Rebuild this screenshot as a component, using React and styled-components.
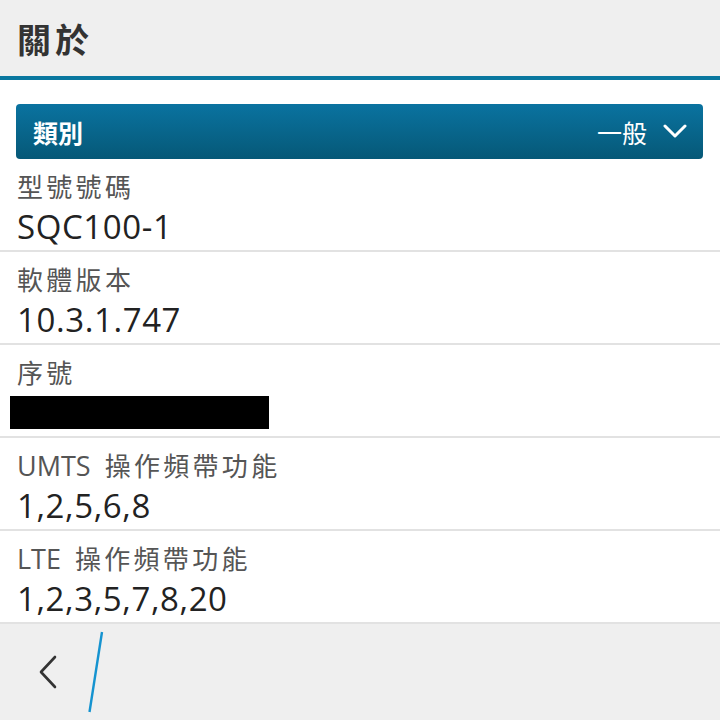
import React from 'react';
import styled, { createGlobalStyle } from 'styled-components';

const GlobalStyle = createGlobalStyle`
  html, body {
    margin: 0;
    padding: 0;
    background: #ffffff;
  }
  body {
    font-family: "Open Sans", "Noto Sans CJK TC", sans-serif;
  }
`;

const Screen = styled.div`
  width: 720px;
  height: 720px;
  display: flex;
  flex-direction: column;
  overflow: hidden;
  background: #ffffff;
`;

const TitleBar = styled.header`
  height: 76px;
  background: #efefef;
  border-bottom: 4px solid #0a779f;
  display: flex;
  align-items: center;
  padding-left: 17px;
`;

const Title = styled.h1`
  margin: 0;
  font-family: "Noto Sans CJK TC", sans-serif;
  font-size: 34px;
  font-weight: 700;
  color: #333333;
  letter-spacing: 4px;
`;

const Content = styled.main`
  flex: 1;
  padding-top: 24px;
`;

const Dropdown = styled.div`
  margin: 0 17px 0 16px;
  height: 55px;
  border-radius: 4px;
  background: linear-gradient(to bottom, #0a73a0, #065877);
  display: flex;
  align-items: center;
  justify-content: space-between;
  padding: 0 16px 0 17px;
  color: #ffffff;
  font-family: "Noto Sans CJK TC", sans-serif;
`;

const DropLabel = styled.span`
  font-size: 25px;
  font-weight: 700;
`;

const DropValue = styled.span`
  display: flex;
  align-items: center;
  gap: 16px;
  font-size: 25px;
  font-weight: 400;
`;

const Row = styled.div`
  height: 91px;
  border-bottom: 2px solid #e2e2e2;
  padding-left: 17px;
  display: flex;
  flex-direction: column;
`;

const Label = styled.div`
  margin-top: 12px;
  height: 30px;
  line-height: 30px;
  display: flex;
  align-items: baseline;
  color: #555555;
`;

const Latin = styled.span`
  font-family: "Open Sans", sans-serif;
  font-size: 27px;
  margin-right: 14px;
`;

const Cjk = styled.span`
  font-family: "Noto Sans CJK TC", sans-serif;
  font-size: 26px;
  letter-spacing: 3.3px;
`;

const Value = styled.div`
  margin-top: 6px;
  height: 40px;
  line-height: 40px;
  font-family: "Open Sans", sans-serif;
  font-size: 33px;
  letter-spacing: 0.6px;
  color: #222222;
`;

const Redacted = styled.div`
  margin: 9px 0 0 -7px;
  width: 259px;
  height: 33px;
  background: #000000;
`;

const Footer = styled.footer`
  flex: 1;
  background: #efefef;
  display: flex;
  align-items: center;
  padding-left: 38px;
  gap: 30px;
`;

const rows = [
  { label: '型號號碼', value: 'SQC100-1' },
  { label: '軟體版本', value: '10.3.1.747' },
  { label: '序號', hidden: true },
  { prefix: 'UMTS', label: '操作頻帶功能', value: '1,2,5,6,8' },
  { prefix: 'LTE', label: '操作頻帶功能', value: '1,2,3,5,7,8,20' },
];

function Chevron() {
  return (
    <svg width="24" height="16" viewBox="0 0 24 16">
      <path d="M2 2 L12 12 L22 2" fill="none" stroke="#ffffff" strokeWidth="3" strokeLinecap="round" strokeLinejoin="round" />
    </svg>
  );
}

function BackArrow() {
  return (
    <svg width="20" height="34" viewBox="0 0 20 34">
      <path d="M17 2 L3 17 L17 32" fill="none" stroke="#333333" strokeWidth="2.6" strokeLinecap="round" strokeLinejoin="round" />
    </svg>
  );
}

function Slash() {
  return (
    <svg width="16" height="82" viewBox="0 0 16 82">
      <path d="M14 1 L1.5 81" fill="none" stroke="#1593d0" strokeWidth="2.4" />
    </svg>
  );
}

export default function App() {
  return (
    <Screen>
      <GlobalStyle />
      <TitleBar>
        <Title>關於</Title>
      </TitleBar>
      <Content>
        <Dropdown>
          <DropLabel>類別</DropLabel>
          <DropValue>
            一般
            <Chevron />
          </DropValue>
        </Dropdown>
        {rows.map((r) => (
          <Row key={(r.prefix || '') + r.label}>
            <Label>
              {r.prefix && <Latin>{r.prefix}</Latin>}
              <Cjk>{r.label}</Cjk>
            </Label>
            {r.hidden ? <Redacted /> : <Value>{r.value}</Value>}
          </Row>
        ))}
      </Content>
      <Footer>
        <BackArrow />
        <Slash />
      </Footer>
    </Screen>
  );
}
